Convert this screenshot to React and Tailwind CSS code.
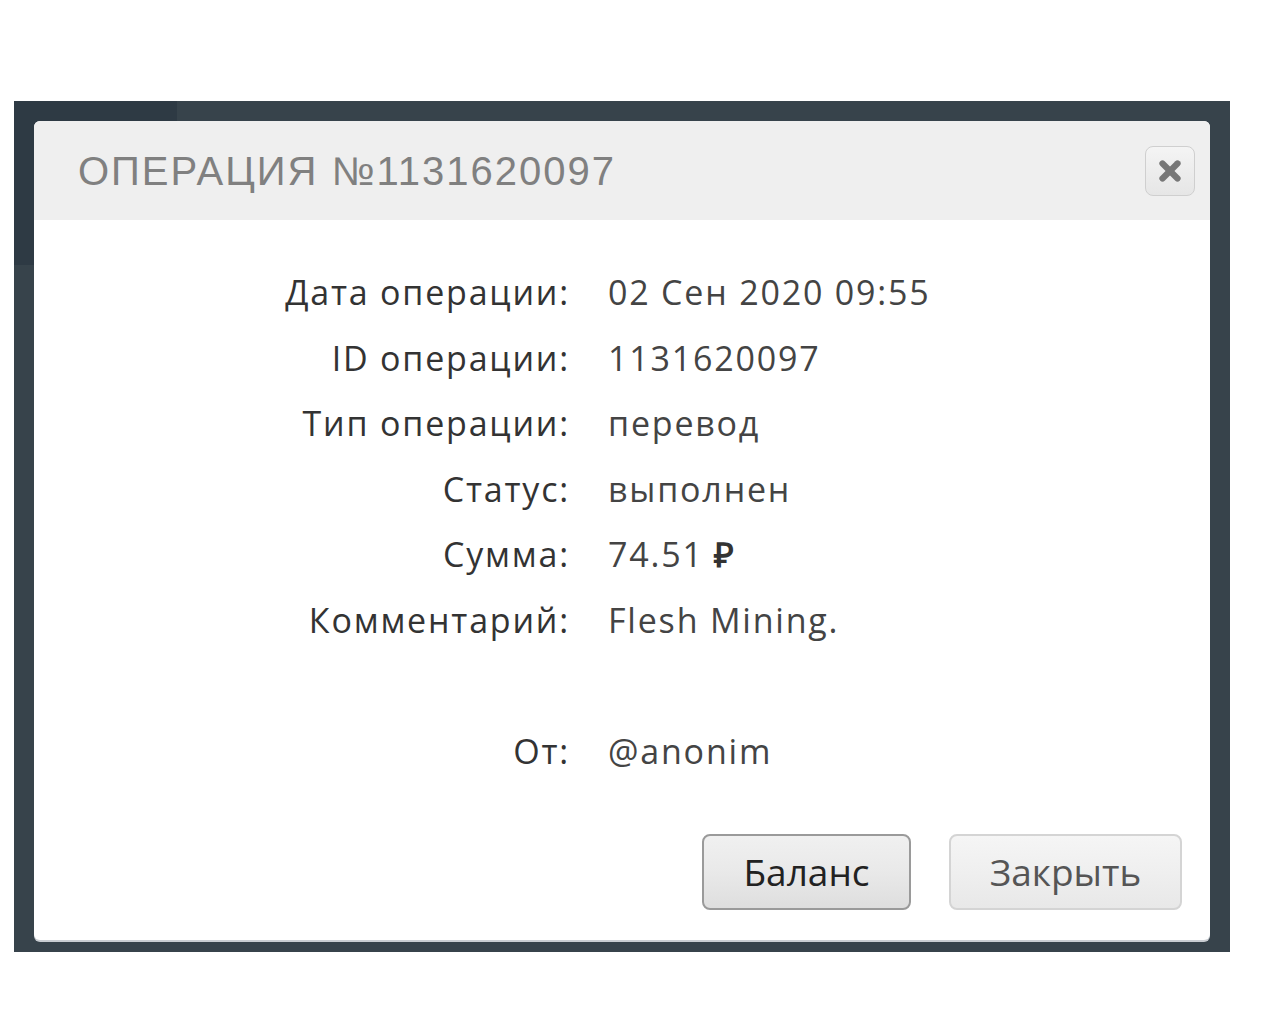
import { X } from 'lucide-react'

const rows = [
  ['Дата операции:', '02 Сен 2020 09:55'],
  ['ID операции:', '1131620097'],
  ['Тип операции:', 'перевод'],
  ['Статус:', 'выполнен'],
  ['Сумма:', '74.51 ₽'],
  ['Комментарий:', 'Flesh Mining.'],
  ['', ''],
  ['От:', '@anonim'],
]

export default function App() {
  return (
    <div className="min-h-[1024px] w-[1280px] bg-white pt-[101px] pl-[14px]">
      {/* dimmed page behind the dialog */}
      <div className="relative w-[1216px] bg-[#37434b] px-[20px] pt-[20px] pb-[12px]">
        <div className="absolute left-0 top-0 h-[164px] w-[163px] bg-[#2e3a44]" />
        <div className="relative flex h-[819px] flex-col overflow-hidden rounded-[6px] bg-white shadow-[0_2px_0_#c9cdd2]">
          <div className="flex h-[99px] items-center justify-between bg-[#efefef] pl-[44px] pr-[15px]">
            <h1 className="font-['Liberation_Sans',sans-serif] text-[40px] tracking-[2px] text-[#808080]">
              ОПЕРАЦИЯ №1131620097
            </h1>
            <button className="flex h-[50px] w-[50px] items-center justify-center rounded-[8px] border border-[#cfcfcf] bg-gradient-to-b from-[#f4f4f4] to-[#e6e6e6]">
              <X className="h-[30px] w-[30px] text-[#777]" strokeWidth={5} />
            </button>
          </div>

          <div className="grid grid-cols-[536px_1fr] gap-x-[38px] pt-[40px] font-['Open_Sans',sans-serif] text-[34px] leading-[65.5px] tracking-[1.8px]">
            {rows.map(([label, value], i) => (
              <div key={i} className="contents">
                <div className="h-[65.5px] text-right text-[#333]">{label}</div>
                <div className="h-[65.5px] text-[#444]">
                  {value.endsWith('₽') ? (
                    <>
                      {value.slice(0, -1)}
                      <span className="font-bold text-[#333]">₽</span>
                    </>
                  ) : (
                    value
                  )}
                </div>
              </div>
            ))}
          </div>

          <div className="mt-[50px] flex justify-end gap-[38px] pr-[28px] font-['Open_Sans',sans-serif] text-[37px]">
            <button className="h-[76px] w-[209px] rounded-[8px] border-2 border-[#9a9a9a] bg-gradient-to-b from-[#f0f0f0] via-[#e9e9e9] to-[#dedede] text-[#222]">
              Баланс
            </button>
            <button className="h-[76px] w-[233px] rounded-[8px] border-2 border-[#d4d4d4] bg-gradient-to-b from-[#f5f5f5] via-[#efefef] to-[#e8e8e8] text-[#555]">
              Закрыть
            </button>
          </div>
        </div>
      </div>
    </div>
  )
}
